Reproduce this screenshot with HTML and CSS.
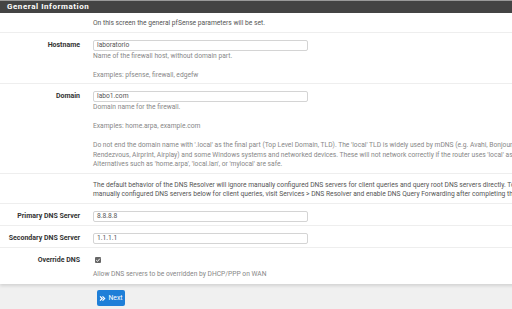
FILE: index.html
```html
<!DOCTYPE html>
<html lang="en">
<head>
    <meta charset="UTF-8">
    <meta name="viewport" content="width=device-width, initial-scale=1.0">
    <title>Wizard / pfSense Setup / General Information</title>
    <link rel="stylesheet" href="styles.css">
</head>
<body>
    <div class="panel">
        <div class="panel-heading">General Information</div>

        <div class="form-row first">
            <div class="form-label"></div>
            <div class="form-field">
                <p class="intro">On this screen the general pfSense parameters will be set.</p>
            </div>
        </div>

        <div class="form-row">
            <div class="form-label">Hostname</div>
            <div class="form-field">
                <div class="input">laboratorio</div>
                <p class="help">Name of the firewall host, without domain part.<br><br>Examples: pfsense, firewall, edgefw</p>
            </div>
        </div>

        <div class="form-row">
            <div class="form-label">Domain</div>
            <div class="form-field">
                <div class="input">labo1.com</div>
                <p class="help">Domain name for the firewall.<br><br>Examples: home.arpa, example.com<br><br>Do not end the domain name with '.local' as the final part (Top Level Domain, TLD). The 'local' TLD is widely used by mDNS (e.g. Avahi, Bonjour,<br>Rendezvous, Airprint, Airplay) and some Windows systems and networked devices. These will not network correctly if the router uses 'local' as its TLD.<br>Alternatives such as 'home.arpa', 'local.lan', or 'mylocal' are safe.</p>
            </div>
        </div>

        <div class="form-row">
            <div class="form-label"></div>
            <div class="form-field">
                <p class="intro">The default behavior of the DNS Resolver will ignore manually configured DNS servers for client queries and query root DNS servers directly. To use the<br>manually configured DNS servers below for client queries, visit Services &gt; DNS Resolver and enable DNS Query Forwarding after completing the wizard.</p>
            </div>
        </div>

        <div class="form-row">
            <div class="form-label">Primary DNS Server</div>
            <div class="form-field">
                <div class="input">8.8.8.8</div>
            </div>
        </div>

        <div class="form-row">
            <div class="form-label">Secondary DNS Server</div>
            <div class="form-field">
                <div class="input">1.1.1.1</div>
            </div>
        </div>

        <div class="form-row last">
            <div class="form-label">Override DNS</div>
            <div class="form-field">
                <div class="check-line">
                    <span class="checkbox">
                        <svg viewBox="0 0 10 10" width="6" height="6"><path d="M2 5.2 L4.2 7.3 L8 2.8" fill="none" stroke="#fff" stroke-width="1.6"/></svg>
                    </span>
                </div>
                <p class="help check-help">Allow DNS servers to be overridden by DHCP/PPP on WAN</p>
            </div>
        </div>
    </div>

    <div class="actions">
        <button class="btn-next">
            <svg viewBox="0 0 10 10" width="7" height="7"><path d="M1.5 2 L4.5 5 L1.5 8 M5 2 L8 5 L5 8" fill="none" stroke="#fff" stroke-width="1.8"/></svg>
            Next
        </button>
    </div>
</body>
</html>
```

FILE: styles.css
```css
* {
    margin: 0;
    padding: 0;
    box-sizing: border-box;
}

body {
    font-family: Roboto, 'Liberation Sans', sans-serif;
    background: #f0f0f0;
    width: 512px;
    height: 309px;
    overflow: hidden;
}

.panel {
    width: 720px;
    background: #fff;
    box-shadow: 0 2px 3px rgba(0,0,0,0.12);
}

.panel-heading {
    height: 13px;
    background: #444;
    border-top: 1px solid #9a9a9a;
    color: #fff;
    font-weight: bold;
    font-size: 8px;
    letter-spacing: 0.55px;
    line-height: 12px;
    padding-left: 7px;
}

.form-row {
    display: flex;
    gap: 13px;
    padding: 7px 0 3px;
    border-bottom: 1px solid #eee;
}

.form-row.first {
    padding-top: 6px;
}

.form-row.last {
    border-bottom: none;
    padding-bottom: 5px;
}

.form-label {
    width: 80px;
    flex-shrink: 0;
    text-align: right;
    font-size: 7px;
    font-weight: bold;
    color: #333;
    line-height: 11px;
}

.form-field {
    flex: 1;
}

.intro {
    font-size: 6.7px;
    line-height: 9.5px;
    color: #555;
    white-space: nowrap;
}

.input {
    width: 215px;
    height: 11px;
    border: 1px solid #d4d4d4;
    border-radius: 2px;
    font-size: 6.7px;
    line-height: 9px;
    color: #555;
    padding-left: 3px;
}

.help {
    margin-top: 1px;
    font-size: 6.7px;
    line-height: 9.5px;
    color: #888;
    white-space: nowrap;
}

.help.check-help {
    margin-top: 4px;
}

.check-line {
    height: 11px;
    display: flex;
    align-items: center;
    padding-left: 2px;
}

.checkbox {
    width: 6px;
    height: 6px;
    background: #666;
    border-radius: 1px;
    display: flex;
    align-items: center;
    justify-content: center;
}

.actions {
    padding: 6px 0 0 97px;
}

.btn-next {
    width: 28px;
    height: 16px;
    background: #1e7fd8;
    border: none;
    border-radius: 2px;
    color: #fff;
    font-family: Roboto, 'Liberation Sans', sans-serif;
    font-size: 6.8px;
    display: flex;
    align-items: center;
    justify-content: center;
    gap: 2px;
}
```
